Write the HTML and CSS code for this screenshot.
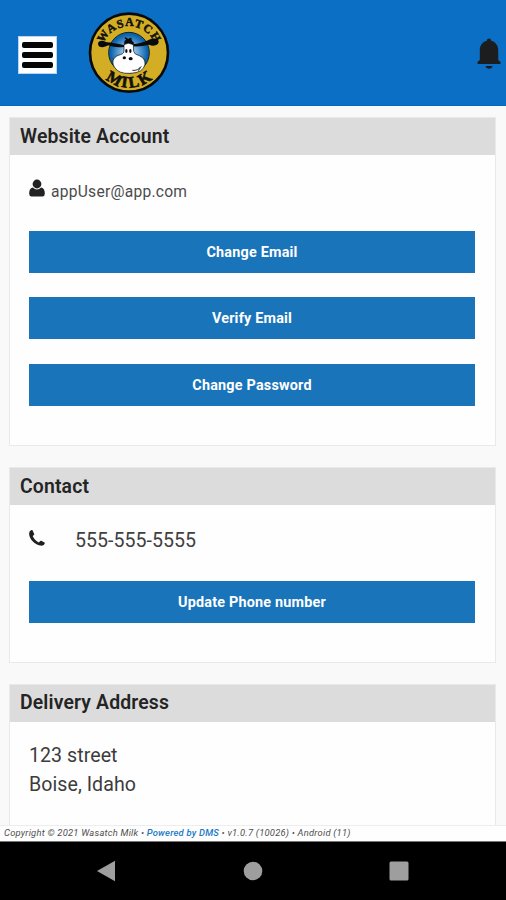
FILE: index.html
```html
<!DOCTYPE html>
<html lang="en">
<head>
<meta charset="utf-8">
<title>Wasatch Milk</title>
<link rel="stylesheet" href="styles.css">
</head>
<body>
<div class="app">
  <header class="topbar">
    <button class="menu" aria-label="Menu"><span></span><span></span><span></span></button>
    <svg class="logo" viewBox="24 21 246 246">
      <defs>
        <radialGradient id="sky"><stop offset="0.2" stop-color="#a5d0f0"/><stop offset="0.9" stop-color="#0b63ad"/></radialGradient>
        <path id="arcTop" d="M66 165a83 83 0 1 1 162 0"/>
        <path id="arcBottom" d="M42 143a105 105 0 0 0 210 0"/>
      </defs>
      <circle cx="147" cy="143" r="117" fill="#d3ad24" stroke="#080b0d" stroke-width="8"/>
      <circle cx="147" cy="143" r="61" fill="url(#sky)" stroke="#15201f" stroke-width="3"/>
      <text class="brand-top" text-anchor="middle"><textPath href="#arcTop" startOffset="50%" textLength="194">WASATCH</textPath></text>
      <text class="brand-bottom" text-anchor="middle"><textPath href="#arcBottom" startOffset="50%" textLength="153">MILK</textPath></text>
      <path d="M133 121Q100 113 80 112C70 105 55 105 54 116C54 130 74 128 84 121Q112 130 133 125ZM157 118Q185 115 204 106C218 98 234 99 236 109C237 122 219 125 207 119Q182 126 158 124Z" fill="#080b0d"/>
      <path d="M133 116Q131 107 138 104Q132 100 135 96Q141 99 145 102Q151 96 155 100Q153 107 162 113L159 124H131Z" fill="#080b0d"/>
      <path d="M132 119Q144 110 160 119L161 139Q162 148 178 152Q196 160 195 178Q190 204 150 205Q115 207 103 186C92 166 104 153 121 149Q133 146 132 135Z" fill="#fff" stroke="#080b0d" stroke-width="2"/>
      <path d="M157 196Q174 198 184 184M174 197Q182 192 180 187" fill="none" stroke="#080b0d" stroke-width="2.5"/>
      <g fill="#080b0d"><ellipse cx="139" cy="138" rx="3.5" ry="6"/><ellipse cx="151" cy="138" rx="3.5" ry="6"/><ellipse cx="133" cy="158" rx="5" ry="4.5"/><ellipse cx="152" cy="161" rx="6" ry="5"/></g>
    </svg>
    <svg class="bell" viewBox="0 0 24 32"><path d="M12 .5c1.300 0 2 .8 2.200 2.200C18.500 4 21.200 7.400 21.200 12v10l2.300 2v2H.5v-2l2.300-2V12C2.800 7.400 5.500 4 9.800 2.700 10 1.300 10.700.5 12 .5zM8.500 28h7c-.4 1.700-1.700 2.700-3.500 2.700S8.900 29.700 8.500 28z" fill="#1b1d1e"/></svg>
  </header>

  <main class="content">
    <section class="card account">
      <h2>Website Account</h2>
      <div class="body">
        <div class="user">
          <svg class="person" viewBox="0 0 16 18"><circle cx="8" cy="5" r="4.400"/><path d="M3.800 8.400Q8 12.500 12.200 8.400C15 9 16 11.500 15.800 15Q15.500 17.500 13.500 17.500H2.500Q.5 17.500.2 15C0 11.500 1 9 3.800 8.400z"/></svg>
          <span>appUser@app.com</span>
        </div>
        <button class="action email">Change Email</button>
        <button class="action verify">Verify Email</button>
        <button class="action password">Change Password</button>
      </div>
    </section>

    <section class="card contact">
      <h2>Contact</h2>
      <div class="body">
        <div class="tel">
          <svg class="phone" viewBox="0 0 16 16"><path d="M3.500.2 5.200 3.900Q5.400 4.500 4.900 5L3.700 6.100C4.800 8.700 7 11.100 9.800 12.400L11.300 10.900Q11.800 10.500 12.300 10.800L15.500 12.500Q16 12.900 15.700 13.500C15 15.300 13.300 16 11.200 15.600 5.500 14.500.5 9.200.1 4Q0 1 2.500.1 3.200-.2 3.500.2z"/></svg>
          <span>555-555-5555</span>
        </div>
        <button class="action update">Update Phone number</button>
      </div>
    </section>

    <section class="card address">
      <h2>Delivery Address</h2>
      <div class="body">
        <div class="street">123 street</div>
        <div class="city">Boise, Idaho</div>
      </div>
    </section>
  </main>

  <footer class="legal"><span>Copyright © 2021 Wasatch Milk • <a>Powered by DMS</a> • v1.0.7 (10026) • Android (11)</span></footer>

  <nav class="system">
    <svg viewBox="0 0 20 22"><path d="M1 11 19 .7v20.600z"/></svg>
    <svg viewBox="0 0 20 22"><circle cx="10" cy="11" r="9.300"/></svg>
    <svg viewBox="0 0 20 22"><rect x=".5" y="1.500" width="19" height="19" rx="1.500"/></svg>
  </nav>
</div>
</body>
</html>
```

FILE: styles.css
```css
* { box-sizing: border-box; }
body { margin: 0; background: #f9f9fa; font-family: Roboto, sans-serif; color: #262626; }
button { border: 0; padding: 0; font-family: inherit; }
.app { width: 506px; height: 900px; display: flex; flex-direction: column; overflow: hidden; }

.topbar { height: 106px; flex: none; background: #0b70c5; border-bottom: 1px solid #0a68b8; display: flex; align-items: flex-start; padding: 12px 5px 0 18px; }
.menu { width: 39px; height: 38px; margin-top: 24px; padding: 5px 3px; background: #fff; border: 1px solid #b9d5f2; display: flex; flex-direction: column; justify-content: space-between; }
.menu span { height: 6px; border-radius: 2px; background: #050505; }
.logo { width: 82px; height: 82px; margin-left: 31px; }
.brand-top, .brand-bottom { font-family: "Liberation Serif", serif; font-weight: bold; fill: #11110c; stroke: #11110c; }
.brand-top { font-size: 35px; stroke-width: 1.5px; }
.brand-bottom { font-size: 48px; stroke-width: 2px; }
.bell { width: 24px; height: 32px; margin: 26px 0 0 auto; }

.content { flex: 1; min-height: 0; overflow: hidden; padding: 11px 10px 0 9px; display: flex; flex-direction: column; gap: 21px; }
.card { flex: none; background: #fefefe; border: 1px solid #e9e9ea; }
.account { height: 329px; }
.contact { height: 196px; }
.address { height: 195px; }
h2 { margin: 0; height: 37px; padding-left: 10px; background: #dcdcdc; font-size: 19.4px; font-weight: 600; line-height: 37px; letter-spacing: .15px; color: #242424; }
.address h2 { line-height: 36px; }
.body { padding: 0 20px 0 19px; }
.action { display: block; width: 100%; height: 42px; background: #1974ba; color: #fff; font-size: 14.4px; font-weight: 700; line-height: 42px; letter-spacing: .2px; }
.email, .password, .update { padding-top: 1px; }
.user { height: 76px; display: flex; align-items: flex-start; font-size: 15.6px; line-height: 20px; letter-spacing: .25px; color: #4c4c4c; }
.user span { margin: 27px 0 0 6px; }
.person { width: 16px; height: 18px; margin-top: 24px; fill: #222; }
.verify { margin-top: 24px; padding-top: 1px; }
.password { margin-top: 25px; }
.tel { height: 76px; display: flex; align-items: flex-start; font-size: 19.6px; line-height: 24px; color: #404040; }
.tel span { margin: 24px 0 0 30px; }
.phone { width: 16px; height: 16px; margin-top: 25px; fill: #202020; }
.address .body { padding-top: 19px; font-size: 19.6px; line-height: 29px; letter-spacing: .05px; color: #3c3c3c; }

.legal { height: 17px; flex: none; padding-left: 4px; background: #fefefe; border-top: 1px solid #ededed; border-bottom: 1px solid #777; font-size: 9.4px; font-style: italic; line-height: 14px; letter-spacing: .225px; color: #505050; white-space: nowrap; }
.legal a { color: #1879c4; font-weight: 500; }
.system { height: 58px; flex: none; background: #000; display: flex; align-items: center; padding-left: 96px; gap: 126.500px; }
.system svg { width: 20px; height: 22px; fill: #9e9e9e; }
```
